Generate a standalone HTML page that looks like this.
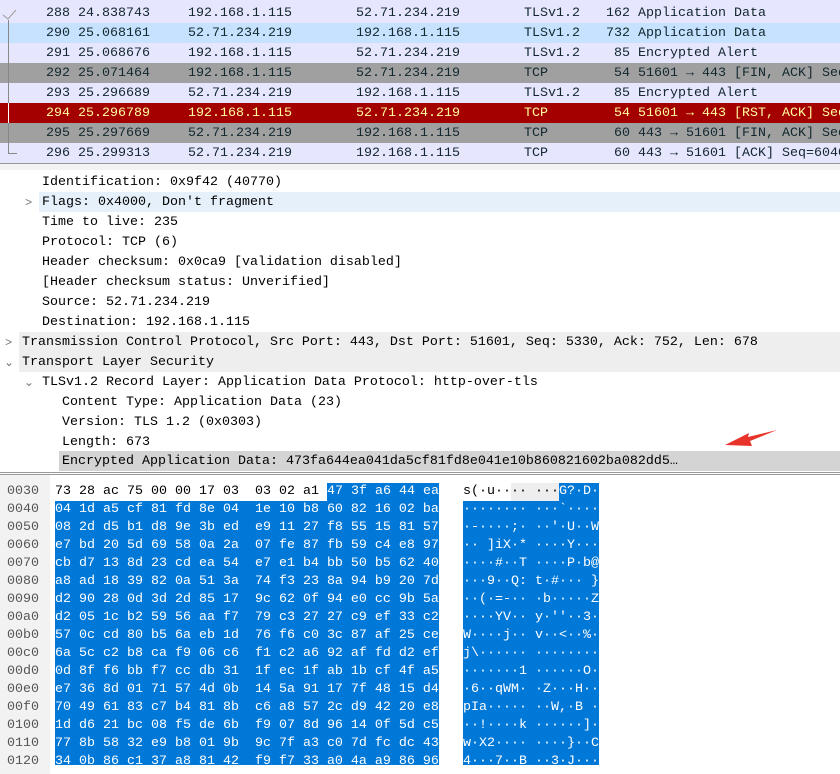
<!DOCTYPE html>
<html><head><meta charset="utf-8"><style>
*{margin:0;padding:0;box-sizing:border-box}
body{width:840px;height:774px;overflow:hidden;background:#fff;font-family:"Liberation Mono",monospace;font-size:13.33px;position:relative}
.r{position:absolute;left:0;width:840px;height:20px;line-height:20px;white-space:pre;color:#12272e}
.r span{position:absolute;top:1px}
.d{position:absolute;height:20px;line-height:20px;white-space:pre;color:#000;right:0}
.h{position:absolute;height:18px;line-height:18px;white-space:pre;color:#000}
.tw{color:#777;position:absolute;font-size:12px}
</style></head><body>
<div style="position:absolute;left:0;top:0;width:840px;height:164px;background:#e7e6ff"></div>

<div class="r" style="top:3px;background:#e7e6ff"><span style="left:46px">288 24.838743</span><span style="left:188px">192.168.1.115</span><span style="left:356px">52.71.234.219</span><span style="left:524px">TLSv1.2</span><span style="left:606px">162 Application Data</span></div>
<div class="r" style="top:23px;background:#c6e2ff"><span style="left:46px">290 25.068161</span><span style="left:188px">52.71.234.219</span><span style="left:356px">192.168.1.115</span><span style="left:524px">TLSv1.2</span><span style="left:606px">732 Application Data</span></div>
<div class="r" style="top:43px;background:#e7e6ff"><span style="left:46px">291 25.068676</span><span style="left:188px">192.168.1.115</span><span style="left:356px">52.71.234.219</span><span style="left:524px">TLSv1.2</span><span style="left:606px"> 85 Encrypted Alert</span></div>
<div class="r" style="top:63px;background:#a0a0a0"><span style="left:46px">292 25.071464</span><span style="left:188px">192.168.1.115</span><span style="left:356px">52.71.234.219</span><span style="left:524px">TCP</span><span style="left:606px"> 54 51601 → 443 [FIN, ACK] Seq</span></div>
<div class="r" style="top:83px;background:#e7e6ff"><span style="left:46px">293 25.296689</span><span style="left:188px">52.71.234.219</span><span style="left:356px">192.168.1.115</span><span style="left:524px">TLSv1.2</span><span style="left:606px"> 85 Encrypted Alert</span></div>
<div class="r" style="top:103px;background:#a40000;color:#fffc9c"><span style="left:46px">294 25.296789</span><span style="left:188px">192.168.1.115</span><span style="left:356px">52.71.234.219</span><span style="left:524px">TCP</span><span style="left:606px"> 54 51601 → 443 [RST, ACK] Seq</span></div>
<div class="r" style="top:123px;background:#a0a0a0"><span style="left:46px">295 25.297669</span><span style="left:188px">52.71.234.219</span><span style="left:356px">192.168.1.115</span><span style="left:524px">TCP</span><span style="left:606px"> 60 443 → 51601 [FIN, ACK] Seq</span></div>
<div class="r" style="top:143px;background:#e7e6ff"><span style="left:46px">296 25.299313</span><span style="left:188px">52.71.234.219</span><span style="left:356px">192.168.1.115</span><span style="left:524px">TCP</span><span style="left:606px"> 60 443 → 51601 [ACK] Seq=6040</span></div>
<svg style="position:absolute;left:0;top:0" width="30" height="164"><path d="M3 15 L8 19 L16 10" stroke="#999" fill="none" stroke-width="1"/><path d="M8.5 20 V153.5 H17" stroke="#888" fill="none"/><path d="M8.5 103 V123" stroke="#fff"/></svg>
<div style="position:absolute;left:0;top:163px;width:840px;height:1px;background:#999"></div>
<div style="position:absolute;left:0;top:164px;width:840px;height:6px;background:#f3f3f3"></div>

<div class="d" style="top:173px;left:42px">Identification: 0x9f42 (40770)</div>
<div class="d" style="top:192px;left:39px;height:20px;background:#e5f0fb;padding-left:3px;line-height:21px">Flags: 0x4000, Don't fragment</div>
<div class="tw" style="left:25px;top:193px;line-height:20px">&gt;</div>
<div class="d" style="top:213px;left:42px">Time to live: 235</div>
<div class="d" style="top:233px;left:42px">Protocol: TCP (6)</div>
<div class="d" style="top:253px;left:42px">Header checksum: 0x0ca9 [validation disabled]</div>
<div class="d" style="top:273px;left:42px">[Header checksum status: Unverified]</div>
<div class="d" style="top:293px;left:42px">Source: 52.71.234.219</div>
<div class="d" style="top:313px;left:42px">Destination: 192.168.1.115</div>
<div class="d" style="top:332px;left:19px;background:#eeeeee;padding-left:3px;line-height:21px">Transmission Control Protocol, Src Port: 443, Dst Port: 51601, Seq: 5330, Ack: 752, Len: 678</div>
<div class="tw" style="left:5px;top:333px;line-height:20px">&gt;</div>
<div class="d" style="top:352px;left:19px;background:#eeeeee;padding-left:3px;line-height:21px">Transport Layer Security</div>
<div class="tw" style="left:4px;top:353px;line-height:20px">⌄</div>
<div class="tw" style="left:24px;top:373px;line-height:20px">⌄</div>
<div class="d" style="top:373px;left:42px">TLSv1.2 Record Layer: Application Data Protocol: http-over-tls</div>
<div class="d" style="top:393px;left:62px">Content Type: Application Data (23)</div>
<div class="d" style="top:413px;left:62px">Version: TLS 1.2 (0x0303)</div>
<div class="d" style="top:433px;left:62px">Length: 673</div>
<div class="d" style="top:451px;left:59px;background:#d4d4d4;padding-left:3px;line-height:22px">Encrypted Application Data: 473fa644ea041da5cf81fd8e041e10b860821602ba082dd5…</div>
<svg style="position:absolute;left:720px;top:425px" width="60" height="25"><path d="M57 5 L28 12 L29 8 L5 20 L32 21 L30 16 Z" fill="#e8332a"/></svg>

<div style="position:absolute;left:0;top:472px;width:840px;height:1px;background:#999"></div>
<div style="position:absolute;left:0;top:474px;width:840px;height:1px;background:#999"></div>
<div style="position:absolute;left:0;top:475px;width:50px;height:299px;background:#f2f2f2"></div>
<div style="position:absolute;left:55px;top:501px;width:384px;height:264px;background:#0078d7"></div>
<div style="position:absolute;left:327px;top:483px;width:112px;height:18px;background:#0078d7"></div>
<div style="position:absolute;left:463px;top:501px;width:136px;height:264px;background:#0078d7"></div>
<div style="position:absolute;left:559px;top:483px;width:40px;height:18px;background:#0078d7"></div>
<div style="position:absolute;left:511px;top:483px;width:48px;height:18px;background:#eeeeee"></div>

<div id="hex"></div>
<script>
var rows=[
["0030","73 28 ac 75 00 00 17 03  03 02 a1 47 3f a6 44 ea","s(·u···· ···G?·D·"],
["0040","04 1d a5 cf 81 fd 8e 04  1e 10 b8 60 82 16 02 ba","········ ···`····"],
["0050","08 2d d5 b1 d8 9e 3b ed  e9 11 27 f8 55 15 81 57","·-····;· ··'·U··W"],
["0060","e7 bd 20 5d 69 58 0a 2a  07 fe 87 fb 59 c4 e8 97","·· ]iX·* ····Y···"],
["0070","cb d7 13 8d 23 cd ea 54  e7 e1 b4 bb 50 b5 62 40","····#··T ····P·b@"],
["0080","a8 ad 18 39 82 0a 51 3a  74 f3 23 8a 94 b9 20 7d","···9··Q: t·#··· }"],
["0090","d2 90 28 0d 3d 2d 85 17  9c 62 0f 94 e0 cc 9b 5a","··(·=-·· ·b·····Z"],
["00a0","d2 05 1c b2 59 56 aa f7  79 c3 27 27 c9 ef 33 c2","····YV·· y·''··3·"],
["00b0","57 0c cd 80 b5 6a eb 1d  76 f6 c0 3c 87 af 25 ce","W····j·· v··<··%·"],
["00c0","6a 5c c2 b8 ca f9 06 c6  f1 c2 a6 92 af fd d2 ef","j\\······ ········"],
["00d0","0d 8f f6 bb f7 cc db 31  1f ec 1f ab 1b cf 4f a5","·······1 ······O·"],
["00e0","e7 36 8d 01 71 57 4d 0b  14 5a 91 17 7f 48 15 d4","·6··qWM· ·Z···H··"],
["00f0","70 49 61 83 c7 b4 81 8b  c6 a8 57 2c d9 42 20 e8","pIa····· ··W,·B ·"],
["0100","1d d6 21 bc 08 f5 de 6b  f9 07 8d 96 14 0f 5d c5","··!····k ······]·"],
["0110","77 8b 58 32 e9 b8 01 9b  9c 7f a3 c0 7d fc dc 43","w·X2···· ····}··C"],
["0120","34 0b 86 c1 37 a8 81 42  f9 f7 33 a0 4a a9 86 96","4···7··B ··3·J···"]];
var h="";
rows.forEach(function(r,i){
 var y=483+i*18;
 h+='<div class="h" style="top:'+y+'px;left:7px;color:#555">'+r[0]+'</div>';
 if(i==0){
  h+='<div class="h" style="top:'+y+'px;left:55px">'+r[1].slice(0,34)+'</div>';
  h+='<div class="h" style="top:'+y+'px;left:327px;color:#fff">'+r[1].slice(34)+'</div>';
  h+='<div class="h" style="top:'+y+'px;left:463px">'+r[2].slice(0,12)+'</div>';
  h+='<div class="h" style="top:'+y+'px;left:559px;color:#fff">'+r[2].slice(12)+'</div>';
 } else {
  h+='<div class="h" style="top:'+y+'px;left:55px;color:#fff">'+r[1]+'</div>';
  h+='<div class="h" style="top:'+y+'px;left:463px;color:#fff">'+r[2].replace(/&/g,"&amp;").replace(/</g,"&lt;")+'</div>';
 }
});
document.getElementById("hex").innerHTML=h;
</script>
</body></html>
